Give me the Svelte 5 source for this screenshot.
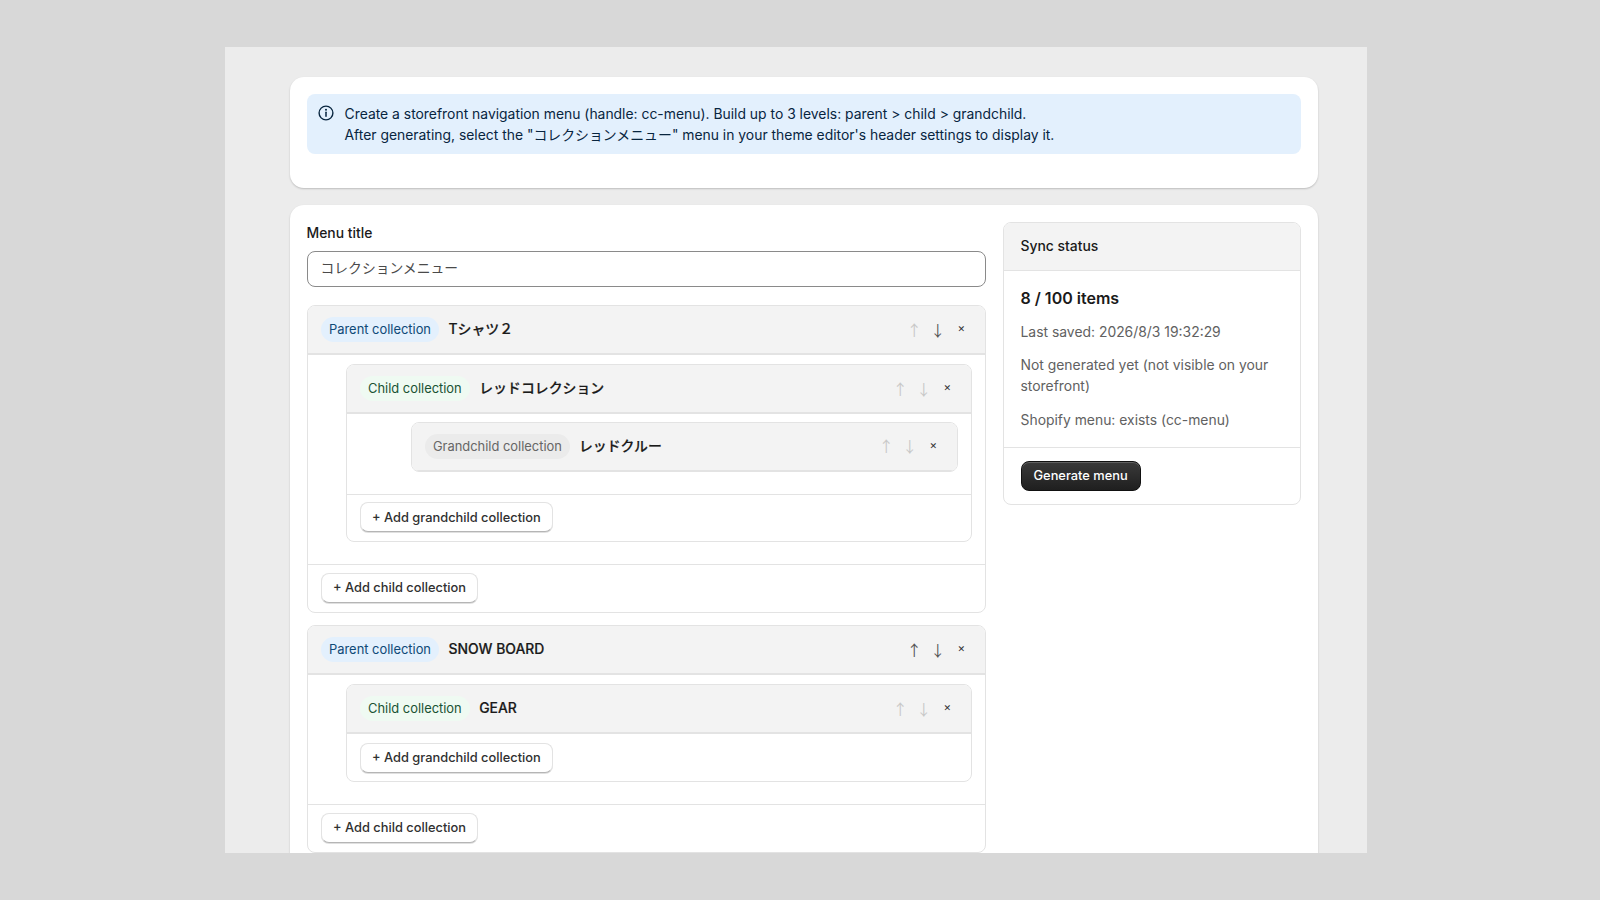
<script>
  const menu = [
    {
      title: 'Tシャツ２', upOn: false,
      children: [{ title: 'レッドコレクション', grand: ['レッドクルー'] }]
    },
    {
      title: 'SNOW BOARD', upOn: true,
      children: [{ title: 'GEAR', grand: [] }]
    }
  ];
</script>

{#snippet head(kind, label, title, upOn, downOn)}
  <div class="row-head">
    <span class="tag {kind}">{label}</span>
    <span class="row-title">{title}</span>
    <div class="row-actions">
      <button class="mv" class:on={upOn}>↑</button>
      <button class="mv" class:on={downOn}>↓</button>
      <button class="rm">×</button>
    </div>
  </div>
{/snippet}

<div class="frame">
  <section class="card notice">
    <div class="banner">
      <svg class="info" viewBox="0 0 20 20" width="20" height="20" fill="none" aria-hidden="true">
        <circle cx="10" cy="10" r="6.9" stroke="#08253f" stroke-width="1.4"/>
        <path d="M10 9.3v4" stroke="#08253f" stroke-width="1.5" stroke-linecap="round"/>
        <circle cx="10" cy="6.8" r="1" fill="#08253f"/>
      </svg>
      <p>Create a storefront navigation menu (handle: cc-menu). Build up to 3 levels: parent &gt; child &gt; grandchild.<br>After generating, select the "コレクションメニュー" menu in your theme editor's header settings to display it.</p>
    </div>
  </section>

  <section class="card main">
    <div class="editor">
      <div class="label">Menu title</div>
      <div class="input">コレクションメニュー</div>

      {#each menu as parent}
        <div class="box parent">
          {@render head('blue', 'Parent collection', parent.title, parent.upOn, true)}
          <div class="nest nest-child">
            {#each parent.children as child}
              <div class="box child">
                {@render head('green', 'Child collection', child.title, false, false)}
                {#if child.grand.length}
                  <div class="nest nest-grand">
                    {#each child.grand as g}
                      <div class="box grand">
                        {@render head('grey', 'Grandchild collection', g, false, false)}
                      </div>
                    {/each}
                  </div>
                {/if}
                <div class="foot" class:plain={!child.grand.length}>
                  <button class="btn">+ Add grandchild collection</button>
                </div>
              </div>
            {/each}
          </div>
          <div class="foot top">
            <button class="btn">+ Add child collection</button>
          </div>
        </div>
      {/each}
    </div>

    <aside class="box status">
      <div class="status-head">Sync status</div>
      <div class="status-body">
        <h3>8 / 100 items</h3>
        <p>Last saved: 2026/8/3 19:32:29</p>
        <p>Not generated yet (not visible on your storefront)</p>
        <p>Shopify menu: exists (cc-menu)</p>
      </div>
      <div class="status-foot">
        <button class="primary">Generate menu</button>
      </div>
    </aside>
  </section>
</div>

<style>
  :global(body) {
    background: #d8d8d8;
    font-family: Inter, "Noto Sans CJK JP", sans-serif;
    font-size: 13.9px;
    line-height: 21px;
    color: #303030;
  }

  .frame {
    box-sizing: border-box;
    width: 1142px;
    height: 806px;
    margin: 47px 0 0 225px;
    padding: 30px 49px 0 64.5px;
    background: #ececec;
    overflow: hidden;
    display: flex;
    flex-direction: column;
    gap: 16.5px;
  }

  .card {
    background: #fff;
    border-radius: 14px;
    box-shadow: 0 1px 2px rgba(0, 0, 0, .2);
    padding: 17px;
  }

  .notice { height: 111px; box-sizing: border-box; flex-shrink: 0; }

  .banner {
    display: flex;
    gap: 8.5px;
    background: #e3f0fd;
    border-radius: 8px;
    padding: 10px 12px 8px 9.5px;
    color: #08253f;
  }

  .info { flex-shrink: 0; margin-top: -1px; }
  .banner p { margin: 0; }

  .main {
    display: grid;
    grid-template-columns: 679.5px 298px;
    gap: 17px;
    align-items: start;
    flex-shrink: 0;
  }

  .label { font-weight: 500; color: #1a1a1a; padding-top: 1.5px; margin-bottom: 7px; }

  .input {
    box-sizing: border-box;
    height: 36px;
    border: 1px solid #8a8a8a;
    border-radius: 8px;
    padding: 6px 13px;
    font-size: 13.8px;
    color: #4a4a4a;
    margin-bottom: 18px;
  }

  .box {
    background: #fff;
    border: 1px solid #e3e3e3;
    border-radius: 8px;
    overflow: hidden;
  }

  .parent { margin-bottom: 12.5px; }

  .row-head {
    display: flex;
    align-items: center;
    height: 47px;
    padding: 0 12px 0 13.5px;
    background: #f3f3f3;
    border-bottom: 2px solid #e3e3e3;
  }

  .grand .row-head {
    border-bottom: none;
    height: 46px;
    padding-bottom: 2px;
    box-shadow: inset 0 -1px 0 #e3e3e3;
  }

  .tag {
    height: 25px;
    line-height: 25px;
    border-radius: 13px;
    padding: 0 8px;
    font-size: 12.9px;
    margin-right: 9.5px;
  }

  .tag.blue { background: #e3f0fd; color: #0f4a78; }
  .tag.green { background: #effaf2; color: #1a5334; }
  .tag.grey { background: #ebebeb; color: #666; margin-right: 9px; }

  .row-title {
    font-weight: 500;
    color: #1a1a1a;
    -webkit-text-stroke: .2px #1a1a1a;
  }

  .row-actions {
    margin-left: auto;
    display: flex;
    align-items: center;
    gap: 0;
  }

  .mv, .rm {
    background: none;
    border: none;
    padding: 0;
    width: 23.5px;
    font: inherit;
    text-align: center;
    color: #c8c8c8;
    line-height: 20px;
  }

  .mv { font-family: "Noto Sans CJK JP", sans-serif; font-size: 15px; }
  .mv.on { color: #555; }
  .rm { color: #303030; font-size: 11.5px; margin-top: -3px; }

  .nest-child { padding: 9px 13px 22px 38px; }
  .nest-grand { padding: 8px 13px 22px 64px; }

  .foot {
    border-top: 1px solid #e3e3e3;
    padding: 7px 13px 9px 13px;
    display: flex;
  }

  .foot.top { padding-top: 7.5px; }
  .foot.plain { border-top: none; padding: 8.5px 13px 8.5px 13px; }

  .btn {
    height: 30px;
    padding: 0 11.5px;
    background: #fff;
    border: 1px solid #e3e3e3;
    border-bottom: 1px solid #b5b5b5;
    border-radius: 8px;
    box-shadow: 0 1px 0 rgba(0, 0, 0, .12);
    font: inherit;
    font-size: 12.85px;
    font-weight: 500;
    color: #303030;
  }

  .status-head {
    height: 47px;
    line-height: 47px;
    padding: 0 16.5px;
    background: #f3f3f3;
    border-bottom: 1px solid #e3e3e3;
    font-weight: 500;
    color: #1a1a1a;
  }

  .status-body {
    padding: 16px 16.5px 16.5px;
    border-bottom: 1px solid #e3e3e3;
    color: #616161;
  }

  .status-body h3 {
    margin: 0 0 13px;
    font-size: 16px;
    line-height: 22px;
    font-weight: 600;
    color: #1a1a1a;
  }

  .status-body p { margin: 0 0 12.5px; }
  .status-body p:last-child { margin-bottom: 0; }

  .status-foot { padding: 12.5px 16.5px 13px; display: flex; }

  .primary {
    height: 30px;
    padding: 0 12px;
    border: 1px solid #111;
    border-radius: 8px;
    background: linear-gradient(#3a3a3a, #1f1f1f);
    box-shadow: inset 0 1px 0 rgba(255, 255, 255, .2);
    font: inherit;
    font-size: 12.85px;
    font-weight: 500;
    color: #fff;
  }
</style>
